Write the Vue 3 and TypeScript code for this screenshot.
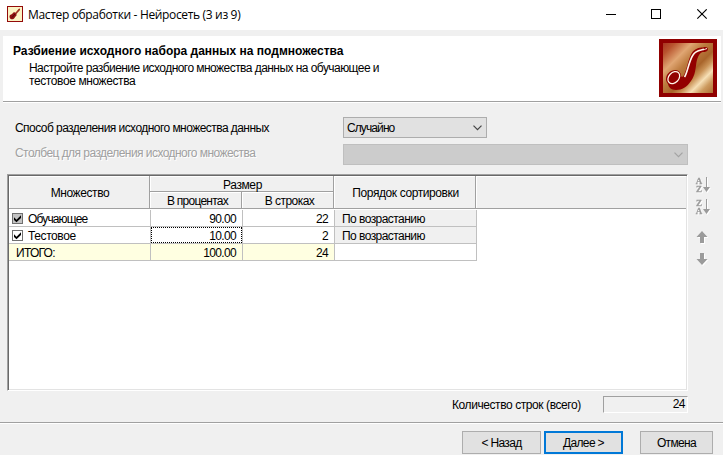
<script setup lang="ts">
import { ref } from 'vue'

interface Row {
  name: string
  locked: boolean
  percent: string
  count: number
  order: string
}

const rows = ref<Row[]>([
  { name: 'Обучающее', locked: true, percent: '90.00', count: 22, order: 'По возрастанию' },
  { name: 'Тестовое', locked: false, percent: '10.00', count: 2, order: 'По возрастанию' },
])
const focusedRow = ref(1)
const total = 24
</script>

<template>
  <div class="window">
    <header class="titlebar">
      <svg class="app-icon" width="16" height="16" viewBox="0 0 16 16">
        <rect x=".5" y=".5" width="15" height="15" fill="#fbf3c4" stroke="#930a0a" />
        <path d="M13 2.5 11.5 3 8 7.3 9 8.5 13 4z" fill="#a03020" />
        <path d="M2.5 10.5C2.5 8.500 4.500 9 5.500 7.500 6.500 6 8 6 8.800 7.200 9.800 8.300 9.800 9.500 8.800 10.300 7.500 11 8 12.500 6 13.200 4 13.800 2.500 12.500 2.500 10.500z" fill="#8f1010" />
        <path d="M5 11.5 8 8" stroke="#4c0505" />
      </svg>
      <span class="caption">Мастер обработки - Нейросеть (3 из 9)</span>
      <svg class="controls" width="104" height="12" viewBox="0 0 104 12" fill="none" stroke="#000">
        <path d="M0 5.500H10" />
        <rect x="45.500" y=".5" width="9" height="9" />
        <path d="M91.300.3 100.700 9.700M100.700.3 91.300 9.700" stroke-width="1.100" />
      </svg>
    </header>

    <section class="banner">
      <div class="banner-text">
        <h1>Разбиение исходного набора данных на подмножества</h1>
        <p><span class="line-1">Настройте разбиение исходного множества данных на обучающее и</span><br /><span class="line-2">тестовое множества</span></p>
      </div>
      <svg class="logo" width="58" height="58" viewBox="0 0 58 58">
        <defs>
          <linearGradient id="metal" x1="0" y1="0" x2="1" y2="1">
            <stop offset="0" stop-color="#a83420" />
            <stop offset=".12" stop-color="#b9552f" />
            <stop offset=".29" stop-color="#e0a673" />
            <stop offset=".43" stop-color="#bd7c40" />
            <stop offset=".58" stop-color="#a9652b" />
            <stop offset=".67" stop-color="#c99256" />
            <stop offset=".77" stop-color="#f6dfb5" />
            <stop offset=".87" stop-color="#cc9a5e" />
            <stop offset="1" stop-color="#ae6e32" />
          </linearGradient>
        </defs>
        <rect width="58" height="58" fill="#900000" />
        <rect x="4" y="4" width="50" height="50" fill="url(#metal)" />
        <path d="M7 40C7 35 12 30.500 17 31 20 31.500 22 34 22 37 23 38.500 24 38 25 36 28 30 29 21 32.500 14.500 35.500 9.500 40 8.500 44 8.500 46.500 7.500 49 8 49 10.500 48.500 12.500 46.500 13 43.500 13 40.500 14 38.500 18 37.500 23 36.500 29 36.500 36 32 42 28 48 23 51 17 51 12 51 9.500 48 9 45 7.500 43 7 41.500 7 40z" fill="#930000" />
        <ellipse cx="14.800" cy="38.600" rx="6.800" ry="5" transform="rotate(-47 14.800 38.600)" fill="none" stroke="#fff4e8" stroke-width="1.300" />
        <path d="M25.500 38C28.500 34 29.500 23 34 16 37 11 41 11.500 45 10.200" fill="none" stroke="#fff7ed" stroke-width="1.600" />
        <path d="M43 10.500C45 11 46.500 10 48 9.500" fill="none" stroke="#fff7ed" />
      </svg>
    </section>

    <section class="form">
      <label class="method">Способ разделения исходного множества данных</label>
      <div class="combo">
        <span class="value">Случайно</span>
        <svg width="9" height="6" viewBox="0 0 9 6"><path d="M.5.7 4.500 4.700 8.500.7" fill="none" stroke="#444" stroke-width="1.200" /></svg>
      </div>
      <label class="column">Столбец для разделения исходного множества</label>
      <div class="combo off">
        <span class="value"></span>
        <svg width="9" height="6" viewBox="0 0 9 6"><path d="M.5.7 4.500 4.700 8.500.7" fill="none" stroke="#a3a3a3" stroke-width="1.200" /></svg>
      </div>
    </section>

    <main class="workspace">
      <div class="grid">
        <div class="head">
          <div class="hc tall">Множество</div>
          <div class="hc size">Размер</div>
          <div class="hc sub percent">В процентах</div>
          <div class="hc sub">В строках</div>
          <div class="hc tall order">Порядок сортировки</div>
          <div class="hc tall rest"></div>
        </div>
        <div class="body">
          <template v-for="(row, i) in rows" :key="row.name">
            <div class="cell first">
              <span class="check" :class="{ locked: row.locked }">
                <svg width="9" height="9" viewBox="0 0 9 9"><path d="M1 3.300 3.500 5.800 8 1.300V4L3.500 8.300 1 6z" fill="#000" /></svg>
              </span>
              <span class="name" :class="{ tight: row.locked }">{{ row.name }}</span>
            </div>
            <div class="cell num" :class="{ focused: i === focusedRow }">{{ row.percent }}</div>
            <div class="cell num">{{ row.count }}</div>
            <div class="cell sort">{{ row.order }}</div>
          </template>
          <div class="cell sum total">ИТОГО:</div>
          <div class="cell sum num">100.00</div>
          <div class="cell sum num">{{ total }}</div>
          <div class="cell"></div>
        </div>
      </div>

      <nav class="tools">
        <svg v-for="pair in ['AZ', 'ZA']" :key="pair" class="sorter" width="16" height="17" viewBox="0 0 16 17" fill="#9b9b9b">
          <text x="4" y="7" class="glyph">{{ pair[0] }}</text>
          <text x="4" y="15" class="glyph">{{ pair[1] }}</text>
          <path d="M11 0h1v10h3l-3.500 5L8 10h3z" />
        </svg>
        <svg v-for="dir in ['up', 'down']" :key="dir" class="arrow" :class="dir" width="12" height="14" viewBox="0 0 12 14" fill="#9b9b9b">
          <path v-if="dir === 'up'" d="M5 0 10.500 6H7v6H3V6H-.5z" />
          <path v-else d="M5 12 10.500 6H7V0H3v6H-.5z" />
        </svg>
      </nav>
    </main>

    <div class="summary">
      <span class="count-label">Количество строк (всего)</span>
      <output class="count">{{ total }}</output>
    </div>

    <footer class="actions">
      <button>&lt; Назад</button>
      <button class="primary">Далее &gt;</button>
      <button class="cancel">Отмена</button>
    </footer>
  </div>
</template>

<style>
body {
  margin: 0;
  overflow: hidden;
}
</style>

<style scoped>
* {
  box-sizing: border-box;
}
.window {
  width: 723px;
  height: 455px;
  display: flex;
  flex-direction: column;
  background: #f0f0f0;
  color: #000;
  font: 12px/14px 'Liberation Sans', Arial, sans-serif;
  letter-spacing: -0.55px;
  white-space: nowrap;
  overflow: hidden;
}
.titlebar {
  height: 30px;
  flex: none;
  display: flex;
  align-items: flex-start;
  padding: 6px 13px 0 7px;
  background: #fff;
}
.caption {
  margin-left: 5px;
  font: 12px/17px 'Open Sans', 'Noto Sans', sans-serif;
  letter-spacing: -0.34px;
}
.controls {
  margin: 3px 0 0 auto;
}
.banner {
  flex: none;
  height: 67px;
  margin: 6px 2px 0 3px;
  padding: 3px 4px 0 10px;
  display: flex;
  justify-content: space-between;
  background: #fff;
  border-bottom: 1px solid #fff;
  box-shadow: inset 0 -1px #a0a0a0;
}
h1 {
  margin: 5px 0 0;
  font-size: 12px;
  line-height: 14px;
  font-weight: bold;
  letter-spacing: 0;
}
p {
  margin: 4px 0 0 16px;
  line-height: 13px;
}
.line-2 {
  letter-spacing: -0.4px;
}
.form {
  flex: none;
  display: grid;
  grid-template-columns: 328px 345px;
  grid-auto-rows: 21px;
  row-gap: 6px;
  margin: 14px 0 0 15px;
}
.form label {
  line-height: 22px;
}
.form .column {
  color: #a0a0a0;
  text-shadow: 1px 1px #fff;
  line-height: 19px;
}
.combo {
  width: 144px;
  display: flex;
  align-items: center;
  justify-content: space-between;
  padding: 0 4px 0 3px;
  background: #e1e1e1;
  border: 1px solid #adadad;
  letter-spacing: -0.9px;
}
.combo.off {
  width: 345px;
  background: #ccc;
  border-color: #bfbfbf;
}
.workspace {
  flex: none;
  display: flex;
  margin: 9px 0 0 7px;
}
.grid {
  width: 681px;
  height: 217px;
  border: 1px solid;
  border-color: #a0a0a0 #fff #fff #a0a0a0;
  background: #fff;
  box-shadow: inset 1px 1px #696969, inset -1px -1px #e3e3e3;
  padding: 1px;
}
.head {
  display: grid;
  grid-template-columns: 141px 92px 92px 142px 210px;
  grid-template-rows: 16px 17px;
  background: #f0f0f0;
}
.hc {
  border-right: 1px solid #a0a0a0;
  border-bottom: 1px solid #a0a0a0;
  box-shadow: inset 1px 1px #fff;
  padding-left: 2px;
  text-align: center;
  line-height: 18px;
  letter-spacing: -0.4px;
}
.tall {
  grid-row: 1 / 3;
  line-height: 34px;
}
.size {
  grid-column: 2 / 4;
  grid-row: 1;
}
.sub {
  grid-row: 2;
  line-height: 19px;
  padding-left: 4px;
  letter-spacing: -0.55px;
}
.percent {
  letter-spacing: -0.75px;
}
.order {
  grid-column: 4;
}
.rest {
  grid-column: 5;
  border-right: 0;
}
.body {
  display: grid;
  grid-template-columns: 142px 92px 92px 142px;
  grid-auto-rows: 17px;
  margin-top: 1px;
}
.cell {
  border-right: 1px solid #c0c0c0;
  border-bottom: 1px solid #c0c0c0;
  line-height: 18px;
  padding: 0 6px 0 7px;
}
.first {
  display: flex;
  padding: 0 0 0 3px;
}
.name {
  letter-spacing: -0.4px;
}
.name.tight {
  letter-spacing: -0.85px;
}
.check {
  width: 11px;
  height: 11px;
  margin: 3px 5px 0 0;
  border: 1px solid #707070;
  background: #fff;
}
.check svg {
  display: block;
}
.check.locked {
  background: #c4c4c4;
}
.num {
  text-align: right;
  padding-right: 6px;
  letter-spacing: -0.65px;
}
.sort {
  background: #f0f0f0;
}
.sum {
  background: #ffffe1;
}
.total {
  letter-spacing: -0.75px;
}
.focused {
  position: relative;
}
.focused::after {
  content: '';
  position: absolute;
  inset: 0;
  border: 1px dotted #000;
}
.tools {
  display: flex;
  flex-direction: column;
  align-items: flex-start;
  padding: 3px 0 0 7px;
}
.tools svg {
  filter: drop-shadow(1px 1px 0 #fff);
}
.sorter {
  margin-bottom: 5px;
}
.arrow {
  margin: 10px 0 0 2px;
  overflow: visible;
}
.arrow.down {
  margin-top: 8px;
}
.glyph {
  font: bold 9px 'Liberation Serif', serif;
  letter-spacing: 0;
  text-anchor: middle;
  stroke: #9b9b9b;
  stroke-width: 0.3px;
}
.summary {
  flex: none;
  display: flex;
  justify-content: flex-end;
  margin: 5px 35px 0 0;
  height: 17px;
}
.count-label {
  width: 151px;
  line-height: 18px;
  letter-spacing: -0.42px;
}
.count {
  width: 85px;
  border: 1px solid;
  border-color: #a0a0a0 #fff #fff #a0a0a0;
  text-align: right;
  line-height: 15px;
  padding-right: 2px;
}
.actions {
  flex: none;
  display: flex;
  margin-top: 9px;
  height: 33px;
  border-top: 1px solid #a0a0a0;
  box-shadow: inset 0 1px #fff;
  padding: 8px 0 0 462px;
}
button {
  width: 79px;
  height: 23px;
  margin: 0 3px 0 0;
  padding: 0;
  border: 1px solid #adadad;
  background: #e1e1e1;
  font: inherit;
  letter-spacing: -0.65px;
  color: #000;
}
.primary {
  border: 2px solid #0078d7;
  margin-right: 17px;
}
.cancel {
  width: 73px;
}
</style>
